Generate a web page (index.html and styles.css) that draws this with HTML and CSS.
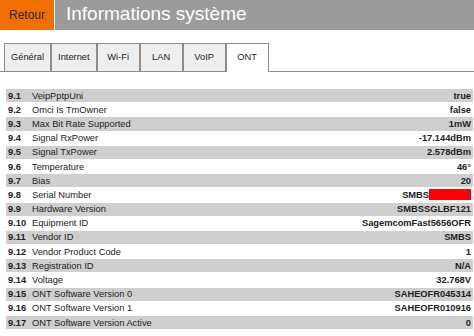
FILE: index.html
```html
<!DOCTYPE html>
<html lang="fr">

<head>
    <meta charset="UTF-8">
    <meta name="viewport" content="width=device-width, initial-scale=1.0">
    <title>Informations système</title>
    <link rel="stylesheet" href="styles.css">
</head>

<body>
    <div class="header">
        <a class="back" href="#">Retour</a>
        <h1 class="title">Informations système</h1>
    </div>

    <ul class="tabs">
        <li class="tab">Général</li>
        <li class="tab">Internet</li>
        <li class="tab">Wi-Fi</li>
        <li class="tab">LAN</li>
        <li class="tab">VoIP</li>
        <li class="tab active">ONT</li>
    </ul>

    <table class="info">
        <tr><td class="num">9.1</td><td class="label">VeipPptpUni</td><td class="value">true</td></tr>
        <tr><td class="num">9.2</td><td class="label">Omci Is TmOwner</td><td class="value">false</td></tr>
        <tr><td class="num">9.3</td><td class="label">Max Bit Rate Supported</td><td class="value">1mW</td></tr>
        <tr><td class="num">9.4</td><td class="label">Signal RxPower</td><td class="value">-17.144dBm</td></tr>
        <tr><td class="num">9.5</td><td class="label">Signal TxPower</td><td class="value">2.578dBm</td></tr>
        <tr><td class="num">9.6</td><td class="label">Temperature</td><td class="value">46°</td></tr>
        <tr><td class="num">9.7</td><td class="label">Bias</td><td class="value">20</td></tr>
        <tr><td class="num">9.8</td><td class="label">Serial Number</td><td class="value">SMBS<span class="redacted"></span></td></tr>
        <tr><td class="num">9.9</td><td class="label">Hardware Version</td><td class="value">SMBSSGLBF121</td></tr>
        <tr><td class="num">9.10</td><td class="label">Equipment ID</td><td class="value">SagemcomFast5656OFR</td></tr>
        <tr><td class="num">9.11</td><td class="label">Vendor ID</td><td class="value">SMBS</td></tr>
        <tr><td class="num">9.12</td><td class="label">Vendor Product Code</td><td class="value">1</td></tr>
        <tr><td class="num">9.13</td><td class="label">Registration ID</td><td class="value">N/A</td></tr>
        <tr><td class="num">9.14</td><td class="label">Voltage</td><td class="value">32.768V</td></tr>
        <tr><td class="num">9.15</td><td class="label">ONT Software Version 0</td><td class="value">SAHEOFR045314</td></tr>
        <tr><td class="num">9.16</td><td class="label">ONT Software Version 1</td><td class="value">SAHEOFR010916</td></tr>
        <tr><td class="num">9.17</td><td class="label">ONT Software Version Active</td><td class="value">0</td></tr>
    </table>
</body>

</html>
```

FILE: styles.css
```css
body {
    font-family: "Liberation Sans", Arial, sans-serif;
    margin: 0;
    color: #222;
    background: #fff;
}

.header {
    display: flex;
    height: 30px;
}

.back {
    width: 54px;
    background-color: #f16e00;
    color: #2a2a2a;
    font-size: 12px;
    text-decoration: none;
    display: flex;
    align-items: center;
    justify-content: center;
}

.title {
    flex: 1;
    margin: 0 0 0 1px;
    padding-left: 11px;
    background-color: #9b9b9b;
    color: #fff;
    font-size: 19px;
    font-weight: normal;
    line-height: 28px;
}

.tabs {
    list-style: none;
    display: flex;
    margin: 13px 0 0;
    padding: 0 0 0 4px;
    border-bottom: 1px solid #8c8c8c;
}

.tab {
    min-width: 29px;
    height: 27px;
    padding: 0 6px;
    border: 1px solid #8c8c8c;
    border-bottom: none;
    background-color: #eee;
    font-size: 9.3px;
    line-height: 27px;
    text-align: center;
}

.tab.active {
    background-color: #fff;
    height: 28px;
    margin-bottom: -1px;
}

.info {
    width: 467px;
    margin: 16px 0 0 6px;
    border-collapse: separate;
    border-spacing: 0 1px;
    font-size: 9.3px;
}

.info td {
    height: 13.2px;
    padding: 0 2px;
    line-height: 12px;
    white-space: nowrap;
}

.info tr:nth-child(odd) td {
    background-color: #cfcfcf;
}

.num {
    width: 20px;
    font-weight: bold;
}

.value {
    text-align: right;
    font-weight: bold;
}

.redacted {
    display: inline-block;
    width: 42px;
    height: 11px;
    background-color: #f00;
    vertical-align: -2px;
}
```
